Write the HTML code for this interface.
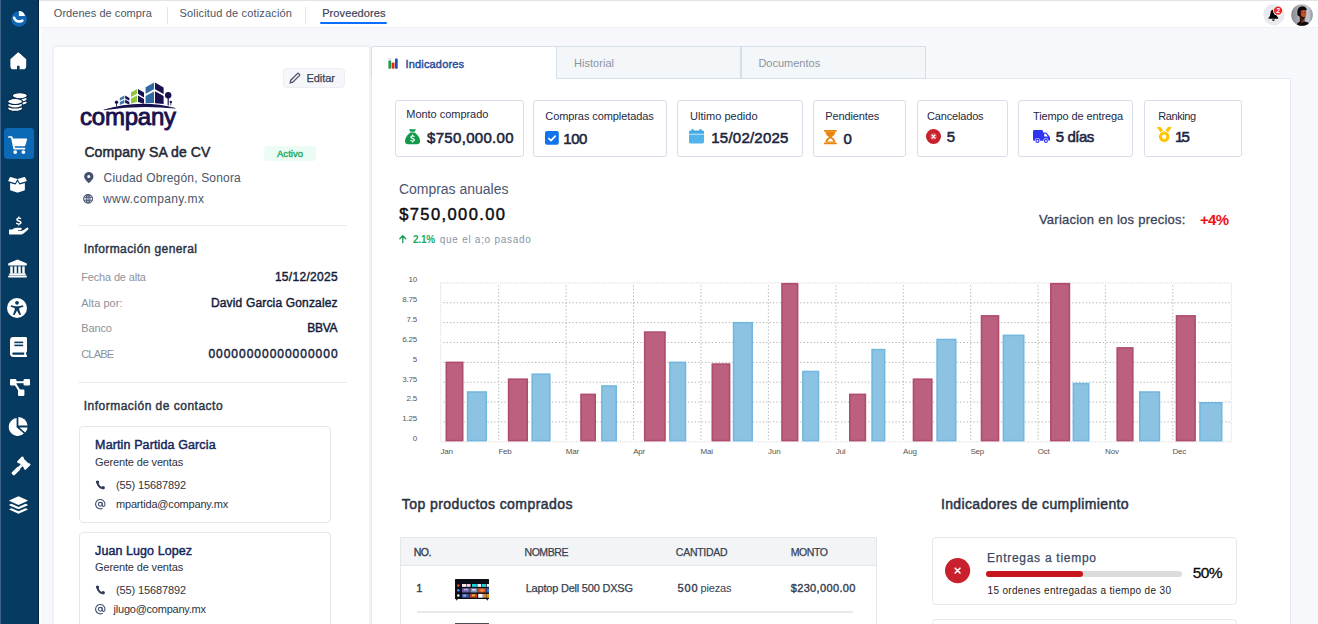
<!DOCTYPE html>
<html lang="es">
<head>
<meta charset="utf-8">
<title>Proveedores</title>
<style>
*{box-sizing:border-box;margin:0;padding:0}
html,body{width:1318px;height:624px;overflow:hidden}
body{position:relative;background:#f7f8fc;font-family:"Liberation Sans",sans-serif;color:#1f2937;font-size:11px}
.a{position:absolute}
.t{position:absolute;white-space:pre;line-height:1}
svg{position:absolute;overflow:visible}
#side{left:0;top:0;width:38.5px;height:624px;background:#073a60}
#side .act{left:3.8px;top:128.4px;width:29.8px;height:30.2px;background:#0b69b5;border-radius:3.5px}
#top{left:38.5px;top:0;width:1280px;height:28px;background:#fff;border-top:1px solid #e4e4e8;border-bottom:1px solid #eef0f5}
.sep{width:1px;height:17px;top:7px;background:#e3e5ea}
#lcard{left:51.6px;top:45px;width:319px;height:600px;background:#fff;border:2px solid #f0f1f5;border-radius:4px}
.hr{height:1px;background:#e9ebef}
.cc{left:79px;width:252px;border:1px solid #e4e7ec;border-radius:4px;background:#fff}
.tab{top:45.5px;height:33.5px;width:185px;border:1px solid #d6dee9;background:#f4f7fa}
#panel{left:371px;top:78px;width:920px;height:560px;background:#fff;border:1px solid #e6e9ef}
.sc{top:100px;height:57px;border:1px solid #d7dee9;border-radius:3px;background:#fff}
</style>
</head>
<body>
<div id="side" class="a"><div class="a" style="left:0;top:0;width:1px;height:624px;background:#3b6486"></div><div class="a" style="left:37.5px;top:0;width:1px;height:624px;background:#031c40"></div><div class="a" style="left:38.5px;top:0;width:2.5px;height:624px;background:#fff"></div><div class="a act"></div>
<svg style="left:10.1px;top:9.9px" width="18" height="18" viewBox="0 0 18 18"><circle cx="9" cy="9" r="8.3" fill="#1166b4" stroke="#052c52" stroke-width=".7"/><path d="M8.9 6 V.9 A6.4 6.4 0 0 1 15 6 Z" fill="#fff"/><path d="M4.1 7.7 Q5.4 11.9 9.6 11.6 Q11.4 11.4 12.4 10.5" fill="none" stroke="#fff" stroke-width="2.5" stroke-linecap="round"/></svg>
<svg style="left:8px;top:50px" width="20" height="20" viewBox="0 0 20 20"><path d="M10.3 3 L3 9.4 V16.2 Q3 18.7 5.5 18.7 H8.4 V16.8 Q8.4 15 10.3 15 Q12.2 15 12.2 16.8 V18.7 H15.1 Q17.6 18.7 17.6 16.2 V9.4 Z" fill="#fff" stroke="#fff" stroke-width="1.2" stroke-linejoin="round"/></svg>
<svg style="left:0;top:80px" width="40" height="40" viewBox="0 0 40 40" fill="#fff" stroke="#04284a" stroke-width="1.1">
<ellipse cx="19.8" cy="22.4" rx="7.5" ry="3"/><ellipse cx="19.8" cy="19.1" rx="7.5" ry="3"/><ellipse cx="19.8" cy="15.7" rx="7.5" ry="3"/>
<ellipse cx="15.1" cy="28.4" rx="7.5" ry="3"/><ellipse cx="15.1" cy="25" rx="7.5" ry="3"/><ellipse cx="15.1" cy="21.5" rx="7.5" ry="3"/></svg>
<svg style="left:7.6px;top:134.7px" width="20" height="19" viewBox="0 0 20 19" fill="#fff"><path d="M0.8 1.2 H3.6 Q4.4 1.2 4.6 2 L4.9 3.4 H18.4 Q19.4 3.4 19.1 4.4 L17.3 10.6 Q17.1 11.3 16.4 11.3 H6.6 L6.9 12.8 H16.6 Q17.4 12.8 17.4 13.6 Q17.4 14.4 16.6 14.4 H6.2 Q5.5 14.4 5.3 13.7 L3 2.8 H0.8 Q0 2.8 0 2 Q0 1.2 0.8 1.2 Z"/><circle cx="7.2" cy="17.1" r="1.9"/><circle cx="15.4" cy="17.1" r="1.9"/></svg><svg style="left:8.1px;top:175.5px" width="19" height="17" viewBox="0 0 20 18" fill="#fff"><path d="M2.2 7.5 V14.2 Q2.2 15 3 15.3 L9.4 17.4 Q10 17.6 10.6 17.4 L17 15.3 Q17.8 15 17.8 14.2 V7.5 L12.6 9 Q12 9.2 11.7 8.6 L10 5.6 L8.3 8.6 Q8 9.2 7.4 9 Z"/><path d="M2 1.4 L0.3 4.8 Q0.1 5.3 0.6 5.5 L7.2 7.4 Q7.6 7.5 7.8 7.1 L10 3.2 L2.6 1.1 Q2.2 1 2 1.4 Z"/><path d="M18 1.4 L19.7 4.8 Q19.9 5.3 19.4 5.5 L12.8 7.4 Q12.4 7.5 12.2 7.1 L10 3.2 L17.4 1.1 Q17.8 1 18 1.4 Z"/></svg><svg style="left:8.6px;top:216.0px" width="20" height="20" viewBox="0 0 20 20" fill="#fff"><path d="M0.6 13.6 H3.2 L5.2 12.2 Q6 11.7 7 11.7 H11.6 Q12.8 11.7 12.8 12.8 Q12.8 13.9 11.6 13.9 H9.2 Q8.8 13.9 8.8 14.3 Q8.8 14.7 9.2 14.7 H12.9 Q13.6 14.7 14.2 14.3 L17.4 11.9 Q18.4 11.2 19.2 12 Q19.9 12.9 19 13.7 L14.6 17.6 Q13.7 18.4 12.5 18.4 H0.6 Q0 18.4 0 17.8 V14.2 Q0 13.6 0.6 13.6 Z"/>
<path d="M9.2 0.6 H10.4 V1.5 Q11.6 1.6 12.4 2.3 L11.7 3.3 Q10.9 2.7 9.9 2.7 Q8.9 2.7 8.9 3.4 Q8.9 4 10.2 4.3 Q12.7 4.9 12.7 6.7 Q12.7 8.3 10.4 8.6 V9.6 H9.2 V8.6 Q7.8 8.5 6.8 7.6 L7.6 6.6 Q8.6 7.4 9.8 7.4 Q11 7.4 11 6.7 Q11 6.1 9.6 5.7 Q7.2 5.1 7.2 3.4 Q7.2 1.9 9.2 1.5 Z"/></svg><svg style="left:7.9px;top:259.1px" width="19" height="19" viewBox="0 0 20 20" fill="#fff"><path d="M10 0.4 L0.6 4.6 Q0.2 4.8 0.2 5.2 V6.2 Q0.2 6.8 0.8 6.8 H19.2 Q19.8 6.8 19.8 6.2 V5.2 Q19.8 4.8 19.4 4.6 Z"/><rect x="2.4" y="7.8" width="2.6" height="7.2"/><rect x="6.6" y="7.8" width="2.6" height="7.2"/><rect x="10.8" y="7.8" width="2.6" height="7.2"/><rect x="15" y="7.8" width="2.6" height="7.2"/><rect x="1.4" y="15" width="17.2" height="2" rx=".5"/><rect x="0.2" y="17.4" width="19.6" height="2.2" rx=".6"/></svg><svg style="left:7.4px;top:298.0px" width="20" height="20" viewBox="0 0 20 20" fill="#fff"><circle cx="10" cy="10" r="10"/><circle cx="10" cy="4.8" r="1.9" fill="#073a60"/><path d="M4 7.2 L8.2 8.2 H11.8 L16 7.2 L16.4 8.7 L12.3 9.9 V12 L14 16.6 L12.5 17.2 L10 12.6 L7.5 17.2 L6 16.6 L7.7 12 V9.9 L3.6 8.7 Z" fill="#073a60"/></svg><svg style="left:9.5px;top:337.0px" width="17" height="20" viewBox="0 0 17 20" fill="#fff"><path d="M3.4 0 H15.6 Q17 0 17 1.4 V14 Q17 15 16.2 15.3 V17.8 H16.4 Q17 17.8 17 18.9 Q17 20 16.4 20 H3.4 Q0 20 0 16.6 V3.4 Q0 0 3.4 0 Z"/><rect x="4.4" y="4.6" width="8.8" height="1.6" fill="#073a60"/><rect x="4.4" y="7.6" width="8.8" height="1.6" fill="#073a60"/><path d="M3.4 15.6 H14.2 V17.8 H3.4 Q2.2 17.8 2.2 16.7 Q2.2 15.6 3.4 15.6 Z" fill="#073a60"/></svg><svg style="left:9.8px;top:379.0px" width="20" height="17" viewBox="0 0 20 17" fill="#fff"><rect x="0" y="0" width="6.4" height="6.4" rx="1.2"/><rect x="13.6" y="0" width="6.4" height="6.4" rx="1.2"/><rect x="8" y="10.6" width="6.4" height="6.4" rx="1.2"/><rect x="5" y="2.2" width="10" height="2"/><path d="M4.2 5.2 L6 4.2 L10.6 11.6 L8.8 12.6 Z"/></svg><svg style="left:8.0px;top:417.0px" width="20" height="20" viewBox="0 0 20 20" fill="#fff"><path d="M8.6 1 A9 9 0 1 0 15.8 16.6 L8.6 10.2 Z"/><path d="M10.4 0 A9.4 9.4 0 0 1 19.6 8.6 H10.4 Z"/><path d="M11.4 10.4 H19.6 A9.4 9.4 0 0 1 17.2 15.6 Z"/></svg><svg style="left:9.8px;top:456.8px" width="20" height="20" viewBox="0 0 20 20" fill="#fff"><g transform="rotate(45 10 10)"><rect x="5.2" y="1.4" width="9.6" height="6.4" rx=".6"/><rect x="4" y="0.6" width="2.6" height="8" rx="1"/><rect x="13.4" y="0.6" width="2.6" height="8" rx="1"/><rect x="8.7" y="7.8" width="2.6" height="4"/><rect x="8" y="11" width="4" height="9.6" rx="1.2"/></g></svg><svg style="left:8.5px;top:495.0px" width="19" height="20" viewBox="0 0 20 19" fill="#fff"><path d="M10 0.2 L19.4 4.4 Q20 4.8 19.4 5.2 L10 9.4 L0.6 5.2 Q0 4.8 0.6 4.4 Z"/><path d="M2.6 8.2 L10 11.5 L17.4 8.2 L19.4 9.1 Q20 9.5 19.4 9.9 L10 14.1 L0.6 9.9 Q0 9.5 0.6 9.1 Z"/><path d="M2.6 12.9 L10 16.2 L17.4 12.9 L19.4 13.8 Q20 14.2 19.4 14.6 L10 18.8 L0.6 14.6 Q0 14.2 0.6 13.8 Z"/></svg></div>
<div id="top" class="a"></div>
<div class="a sep" style="left:167px"></div>
<div class="a sep" style="left:305.3px"></div>
<div class="a" style="left:320.2px;top:22.1px;width:67.3px;height:2.1px;background:#0d6efd;border-radius:1px"></div>
<div id="lcard" class="a"></div>
<div class="a" style="left:283px;top:68px;width:62px;height:19.5px;background:#f6f7fb;border:1px solid #eceef3;border-radius:4px"></div>
<svg style="left:288.6px;top:71.6px" width="12" height="12" viewBox="0 0 12 12" fill="none" stroke="#47516a" stroke-width="1.3"><path d="M1.2 10.8 L1.8 8.2 L8.4 1.6 Q9 1 9.6 1.6 L10.4 2.4 Q11 3 10.4 3.6 L3.8 10.2 Z"/></svg>
<svg style="left:70px;top:70px" width="120" height="70" viewBox="0 0 120 70">
<g fill="#17124f">
<path d="M33 40 Q70 28.5 106 38.2 Q70 33.5 33 40 Z"/>
<path d="M33.5 39.8 Q70 30 105.5 38 L105 38.6 Q70 34.6 34 40.2 Z"/>
<circle cx="46.5" cy="32.3" r="1.7"/><rect x="46.1" y="33" width=".9" height="3.6"/>
<circle cx="98.2" cy="25.2" r="3.2"/><rect x="97.6" y="27" width="1.2" height="8.4"/>
<circle cx="100.8" cy="32" r="1.2"/><rect x="100.5" y="32" width=".7" height="3.6"/>
<path d="M55.2 25.6 L59.4 28 V30.8 L55.2 28.4 Z"/><path d="M55.2 29.6 L59.4 32 V34.6 L55.2 33 Z"/>
<path d="M68 19 L74 22.6 V27.4 L68 23.8 Z"/><path d="M68 25.4 L74 29 V33.8 L68 32 Z"/>
<path d="M85 12.4 L93.6 17.4 V24 L85 19.2 Z"/><path d="M85 21.2 L93.6 26 V34 L85 33.2 Z"/>
</g>
<g fill="#3f78a8"><path d="M49.8 28 L54.4 25.6 V28.4 L49.8 30.8 Z"/><path d="M49.8 32 L54.4 29.8 V33 L49.8 35 Z"/></g>
<g fill="#8dc63f"><path d="M61 22.4 L67 19 V23.8 L61 27 Z"/><path d="M61 28.6 L67 25.4 V32 L61 33.6 Z"/></g>
<g fill="#2f6aa3"><path d="M75.6 17.2 L84 12.4 V19.2 L75.6 23.8 Z"/><path d="M75.6 26 L84 21.4 V33 L75.6 33.2 Z"/></g>
</svg>
<div class="a" style="left:263.6px;top:146px;width:52.4px;height:14.6px;background:#eafcf3;border-radius:4px"></div>
<svg style="left:84.1px;top:172.2px" width="9.6" height="11.2" viewBox="0 0 9.6 11.2" fill="#44506f"><path d="M4.8 0 A4.7 4.7 0 0 1 9.5 4.6 Q9.5 7.2 4.8 11.2 Q0.1 7.2 0.1 4.6 A4.7 4.7 0 0 1 4.8 0 Z M4.8 2.9 A1.55 1.55 0 1 0 4.8 6 A1.55 1.55 0 1 0 4.8 2.9 Z" fill-rule="evenodd"/></svg>
<svg style="left:83.2px;top:193.6px" width="10.2" height="9.6" viewBox="0 0 10.2 9.6" fill="none" stroke="#4c5877" stroke-width="1.05"><ellipse cx="5.1" cy="4.8" rx="4.5" ry="4.2"/><ellipse cx="5.1" cy="4.8" rx="1.9" ry="4.2"/><path d="M.9 3.3 H9.3 M.9 6.3 H9.3 M5.1 .6 V9"/></svg>
<div class="a hr" style="left:78px;top:225px;width:269px"></div>
<div class="a hr" style="left:78px;top:382px;width:269px"></div>
<div class="a cc" style="top:425.5px;height:97px"></div>
<div class="a cc" style="top:531.5px;height:100px"></div>
<svg style="left:94.9px;top:480.1px" width="10.4" height="10" viewBox="0 0 10.4 10"><path d="M2.5 2 Q2.3 4.6 4.6 6.7 Q6.3 8.2 8.3 7.9" fill="none" stroke="#2f3c5e" stroke-width="2" stroke-linecap="round"/><circle cx="2.5" cy="2.1" r="1.7" fill="#2f3c5e"/><circle cx="8.2" cy="7.8" r="1.7" fill="#2f3c5e"/></svg>
<svg style="left:94.9px;top:585.4px" width="10.4" height="10" viewBox="0 0 10.4 10"><path d="M2.5 2 Q2.3 4.6 4.6 6.7 Q6.3 8.2 8.3 7.9" fill="none" stroke="#2f3c5e" stroke-width="2" stroke-linecap="round"/><circle cx="2.5" cy="2.1" r="1.7" fill="#2f3c5e"/><circle cx="8.2" cy="7.8" r="1.7" fill="#2f3c5e"/></svg>
<svg style="left:94.9px;top:499px" width="10.7" height="10.7" viewBox="0 0 10.7 10.7" fill="none" stroke="#47537280" stroke-width="1.1"><g stroke="#475372"><circle cx="5.3" cy="5.3" r="1.9"/><path d="M7.3 3.4 V6 Q7.3 7.4 8.5 7.4 Q10 7.2 10 5.2 A4.7 4.7 0 1 0 7.6 9.3"/></g></svg>
<svg style="left:94.9px;top:604.4px" width="10.7" height="10.7" viewBox="0 0 10.7 10.7" fill="none" stroke="#47537280" stroke-width="1.1"><g stroke="#475372"><circle cx="5.3" cy="5.3" r="1.9"/><path d="M7.3 3.4 V6 Q7.3 7.4 8.5 7.4 Q10 7.2 10 5.2 A4.7 4.7 0 1 0 7.6 9.3"/></g></svg>
<svg style="left:1263px;top:4px" width="22" height="22" viewBox="0 0 22 22"><circle cx="11" cy="10.8" r="10.6" fill="#e9eaef"/>
<path d="M10.4 5.6 Q7.4 6.2 7.4 9.6 Q7.4 12.4 5.6 13.8 V14.8 H15.2 V13.8 Q13.4 12.4 13.4 9.6 Q13.4 6.2 10.4 5.6 Z M9 15.6 H11.8 A1.4 1.4 0 0 1 9 15.6 Z" fill="#050505"/>
<circle cx="15" cy="6.6" r="5" fill="#effafa"/><circle cx="15" cy="6.6" r="4.2" fill="#f0261c"/></svg>
<svg style="left:1290.5px;top:3.6px" width="22" height="22" viewBox="0 0 22 22"><defs><clipPath id="av"><circle cx="11" cy="11" r="10.8"/></clipPath><linearGradient id="avg" x1="0" x2="1"><stop offset="0" stop-color="#88888e"/><stop offset=".35" stop-color="#a9abb1"/><stop offset=".8" stop-color="#c3c9d2"/><stop offset="1" stop-color="#909096"/></linearGradient></defs>
<g clip-path="url(#av)"><rect width="22" height="22" fill="url(#avg)"/>
<path d="M5.4 22 L6.6 19 L8.8 17.6 V13 L13.4 14 V17.4 L17.4 18.6 L18.2 22 Z" fill="#100b0a"/>
<path d="M9.4 14 L9.8 18.6 Q11.4 19.4 12.8 17 L13.2 13.4 Z" fill="#5a2412"/>
<path d="M12.6 15.6 L12.8 17.6 L11.2 19 Z" fill="#c4562e"/>
<ellipse cx="11.6" cy="9.8" rx="3.7" ry="5" fill="#c9532d"/>
<path d="M7.9 8.6 Q8 15 11.6 15.2 Q13.6 15 14.6 12.8 Q12.6 13.6 11 12.4 Q9.6 11.4 9.6 8.6 Z" fill="#2a130c"/>
<path d="M6.6 11.4 Q5.2 4.8 9.2 2.8 Q13.4 1.2 15.6 4.8 Q15.8 6.8 14.8 6.4 Q11.4 5.2 9.8 7.2 Q9 9 8.6 12.4 Z" fill="#0e0909"/>
<path d="M13.2 8.6 L14.4 8.4 M10.4 8.8 L11.8 8.6" stroke="#3a170c" stroke-width=".7"/>
</g></svg>
<div id="panel" class="a"></div>
<div class="a tab" style="left:556px"></div><div class="a tab" style="left:741px"></div>
<div class="a tab" style="left:371px;width:186px;background:#fff;border-bottom-color:#fff;border-top-left-radius:3px"></div>
<svg style="left:387.5px;top:57px" width="10.5" height="12" viewBox="0 0 10.5 12"><rect x=".2" y="1" width="3" height="2" fill="#dfe6f3"/><rect x=".4" y="3.6" width="2.8" height="8.2" rx=".8" fill="#1e9e4a"/><rect x="3.7" y="5.6" width="2.8" height="6.2" rx=".8" fill="#e02b20"/><rect x="7" y="1.6" width="2.7" height="10.2" rx=".8" fill="#1f4fae"/></svg>
<div class="a sc" style="left:395px;width:129.0px"></div>
<div class="a sc" style="left:533px;width:134.0px"></div>
<div class="a sc" style="left:677px;width:126.0px"></div>
<div class="a sc" style="left:813px;width:93.0px"></div>
<div class="a sc" style="left:917px;width:91.0px"></div>
<div class="a sc" style="left:1018px;width:115.0px"></div>
<div class="a sc" style="left:1144px;width:98.0px"></div>
<svg style="left:405px;top:129px" width="15" height="15.2" viewBox="0 0 15 15.2"><path d="M4.4 0.3 H10.6 Q11 .3 10.8 .8 L9.6 2.8 H5.4 L4.2 .8 Q4 .3 4.4 .3 Z M5.3 3.6 H9.7 Q15 8 15 12 Q15 15.2 12 15.2 H3 Q0 15.2 0 12 Q0 8 5.3 3.6 Z" fill="#109b4b"/><path d="M7 5.6 H8.1 V6.5 Q9.1 6.6 9.8 7.2 L9.2 8.1 Q8.5 7.6 7.6 7.6 Q6.8 7.6 6.8 8.1 Q6.8 8.6 7.9 8.9 Q10 9.4 10 10.9 Q10 12.2 8.1 12.5 V13.4 H7 V12.5 Q5.8 12.4 5 11.6 L5.7 10.8 Q6.5 11.4 7.5 11.4 Q8.5 11.4 8.5 10.9 Q8.5 10.4 7.3 10.1 Q5.3 9.6 5.3 8.1 Q5.3 6.8 7 6.5 Z" fill="#fff"/></svg>
<svg style="left:544.5px;top:130.6px" width="13.8" height="13.8" viewBox="0 0 14 14"><rect width="14" height="14" rx="2" fill="#1273ea"/><path d="M3.8 7.6 L6.1 9.8 L10.4 5.2" fill="none" stroke="#fff" stroke-width="1.7" stroke-linecap="round" stroke-linejoin="round"/></svg>
<svg style="left:689.4px;top:129.2px" width="15" height="14.4" viewBox="0 0 15 14.4"><rect x="2.6" y="0" width="2" height="3.4" rx=".6" fill="#3fa9e4"/><rect x="10.4" y="0" width="2" height="3.4" rx=".6" fill="#3fa9e4"/><path d="M1.4 1.6 H13.6 Q15 1.6 15 3 V4.8 H0 V3 Q0 1.6 1.4 1.6 Z" fill="#3fa9e4"/><path d="M0 5.6 H15 V13 Q15 14.4 13.6 14.4 H1.4 Q0 14.4 0 13 Z" fill="#52b4ea"/></svg>
<svg style="left:824px;top:130.3px" width="12.8" height="14.2" viewBox="0 0 12.8 14.2"><path d="M.6 0 H12.2 Q12.8 0 12.8 .9 Q12.8 1.8 12.2 1.8 H.6 Q0 1.8 0 .9 Q0 0 .6 0 Z M.6 12.4 H12.2 Q12.8 12.4 12.8 13.3 Q12.8 14.2 12.2 14.2 H.6 Q0 14.2 0 13.3 Q0 12.4 .6 12.4 Z" fill="#e8850c"/><path d="M1.5 1.8 H11.3 Q11.3 5 7.6 7.1 Q11.3 9.2 11.3 12.4 H1.5 Q1.5 9.2 5.2 7.1 Q1.5 5 1.5 1.8 Z M6.4 8.2 Q3.9 9.6 3.4 11.4 H9.4 Q8.9 9.6 6.4 8.2 Z" fill="#e8850c" fill-rule="evenodd"/></svg>
<svg style="left:926.2px;top:129.2px" width="15" height="15" viewBox="0 0 15 15"><circle cx="7.5" cy="7.5" r="7.5" fill="#c8202c"/><circle cx="7.5" cy="7.5" r="3.4" fill="#d9474f"/><path d="M6 6 L9 9 M9 6 L6 9" stroke="#fff" stroke-width="1.2" stroke-linecap="round"/></svg>
<svg style="left:1033.1px;top:130px" width="17" height="13.4" viewBox="0 0 17 13.4" fill="#2f33f2"><path d="M1.2 0 H8.8 Q10 0 10 1.2 V2.6 H12.6 Q13.4 2.6 13.9 3.2 L16.4 6.2 Q17 6.9 17 7.6 V9.8 Q17 10.8 16 10.8 H15.4 A2.5 2.5 0 0 0 10.4 10.8 H7 A2.5 2.5 0 0 0 2 10.8 H1.2 Q0 10.8 0 9.6 V1.2 Q0 0 1.2 0 Z M11.2 3.8 V6.6 H15 L12.8 3.8 Z" fill-rule="evenodd"/><circle cx="4.5" cy="10.9" r="1.5" fill="#fff" stroke="#2f33f2" stroke-width="1.1"/><circle cx="12.9" cy="10.9" r="1.5" fill="#fff" stroke="#2f33f2" stroke-width="1.1"/></svg>
<svg style="left:1157px;top:127.4px" width="14.6" height="15" viewBox="0 0 14.6 15"><path d="M0 .4 Q0 0 .5 0 H3.2 Q3.7 0 4 .4 L6.1 3.6 L3.4 5.3 Z M14.6 .4 Q14.6 0 14.1 0 H11.4 Q10.9 0 10.6 .4 L8.5 3.6 L11.2 5.3 Z" fill="#fdc500"/><circle cx="7.2" cy="9.7" r="3.75" fill="none" stroke="#fdc500" stroke-width="3.1"/></svg>
<svg style="left:398.8px;top:235px" width="7.6" height="8.2" viewBox="0 0 7.6 8.2" fill="none" stroke="#1a9c55" stroke-width="1.3" stroke-linecap="round" stroke-linejoin="round"><path d="M3.8 7.6 V.9 M.8 3.8 L3.8 .8 L6.8 3.8"/></svg>
<svg style="left:0;top:0" width="1318" height="624" viewBox="0 0 1318 624">
<g fill="none" stroke="#b4b4b4" stroke-width="1" stroke-dasharray="1.3 2.1">
<path d="M443.2 302.8 H1231.3"/><path d="M443.2 322.6 H1231.3"/><path d="M443.2 342.5 H1231.3"/><path d="M443.2 362.4 H1231.3"/><path d="M443.2 382.2 H1231.3"/><path d="M443.2 402.1 H1231.3"/><path d="M443.2 421.9 H1231.3"/><path d="M498.7 285.4 V441.8"/><path d="M566.1 285.4 V441.8"/><path d="M633.5 285.4 V441.8"/><path d="M700.9 285.4 V441.8"/><path d="M768.4 285.4 V441.8"/><path d="M836.0 285.4 V441.8"/><path d="M903.3 285.4 V441.8"/><path d="M970.7 285.4 V441.8"/><path d="M1038.0 285.4 V441.8"/><path d="M1105.4 285.4 V441.8"/><path d="M1172.8 285.4 V441.8"/></g>
<rect x="440.7" y="282.9" width="790.6" height="158.9" fill="none" stroke="#d4d4d4" stroke-width="1" stroke-dasharray="1 1.2"/>
<rect x="446.3" y="362.4" width="16.4" height="78.2" fill="#bb607e" stroke="#b04c6f" stroke-width="1.6"/><rect x="508.6" y="379.2" width="18.6" height="61.4" fill="#bb607e" stroke="#b04c6f" stroke-width="1.6"/><rect x="581.0" y="394.4" width="14.2" height="46.2" fill="#bb607e" stroke="#b04c6f" stroke-width="1.6"/><rect x="644.7" y="332.1" width="20.3" height="108.5" fill="#bb607e" stroke="#b04c6f" stroke-width="1.6"/><rect x="712.3" y="364.1" width="17.3" height="76.5" fill="#bb607e" stroke="#b04c6f" stroke-width="1.6"/><rect x="782.0" y="283.7" width="15.6" height="156.9" fill="#bb607e" stroke="#b04c6f" stroke-width="1.6"/><rect x="849.8" y="394.4" width="15.6" height="46.2" fill="#bb607e" stroke="#b04c6f" stroke-width="1.6"/><rect x="913.5" y="379.2" width="18.3" height="61.4" fill="#bb607e" stroke="#b04c6f" stroke-width="1.6"/><rect x="981.5" y="315.9" width="17.0" height="124.7" fill="#bb607e" stroke="#b04c6f" stroke-width="1.6"/><rect x="1050.8" y="283.7" width="18.6" height="156.9" fill="#bb607e" stroke="#b04c6f" stroke-width="1.6"/><rect x="1117.2" y="347.9" width="15.6" height="92.7" fill="#bb607e" stroke="#b04c6f" stroke-width="1.6"/><rect x="1176.5" y="315.9" width="18.6" height="124.7" fill="#bb607e" stroke="#b04c6f" stroke-width="1.6"/>
<rect x="467.6" y="392.0" width="18.6" height="48.6" fill="#8cc3e2" stroke="#72b7df" stroke-width="1.6"/><rect x="532.2" y="374.2" width="17.6" height="66.4" fill="#8cc3e2" stroke="#72b7df" stroke-width="1.6"/><rect x="601.9" y="386.0" width="14.3" height="54.6" fill="#8cc3e2" stroke="#72b7df" stroke-width="1.6"/><rect x="669.9" y="362.4" width="15.6" height="78.2" fill="#8cc3e2" stroke="#72b7df" stroke-width="1.6"/><rect x="733.6" y="322.7" width="18.6" height="117.9" fill="#8cc3e2" stroke="#72b7df" stroke-width="1.6"/><rect x="802.9" y="371.5" width="15.6" height="69.1" fill="#8cc3e2" stroke="#72b7df" stroke-width="1.6"/><rect x="872.1" y="349.6" width="12.5" height="91.0" fill="#8cc3e2" stroke="#72b7df" stroke-width="1.6"/><rect x="937.1" y="339.5" width="18.6" height="101.1" fill="#8cc3e2" stroke="#72b7df" stroke-width="1.6"/><rect x="1003.4" y="335.4" width="20.3" height="105.2" fill="#8cc3e2" stroke="#72b7df" stroke-width="1.6"/><rect x="1073.4" y="383.6" width="15.3" height="57.0" fill="#8cc3e2" stroke="#72b7df" stroke-width="1.6"/><rect x="1139.8" y="392.0" width="19.6" height="48.6" fill="#8cc3e2" stroke="#72b7df" stroke-width="1.6"/><rect x="1200.0" y="402.8" width="21.7" height="37.8" fill="#8cc3e2" stroke="#72b7df" stroke-width="1.6"/>
</svg>
<div class="a" style="left:399.5px;top:537px;width:477.2px;height:100px;border:1px solid #e5e7eb;background:#fff"></div>
<div class="a" style="left:400.5px;top:538px;width:475.2px;height:28px;background:#f3f4f6;border-bottom:1px solid #e5e7eb"></div>
<div class="a" style="left:417px;top:611.3px;width:435.5px;height:1.4px;background:#e8e9ec"></div>
<svg style="left:455.2px;top:578.5px" width="34" height="22" viewBox="0 0 34 22"><rect width="34" height="20" rx=".5" fill="#0b0e16"/><path d="M.8 20 H3 L1.4 21.8 Z M31 20 H33.2 L32.6 21.8 Z" fill="#2a2d35"/>
<circle cx="3.3" cy="6.4" r="1.25" fill="#ef4a3c"/><circle cx="3.3" cy="11.3" r="1.25" fill="#5b8def"/><circle cx="3.3" cy="16.6" r="1.25" fill="#f4f4f4"/>
<rect x="7" y="5" width="4.2" height="2.9" fill="#fbe9ea"/><rect x="11.6" y="5" width="4" height="2.9" fill="#f6cfd3"/><rect x="17" y="5" width="4.8" height="2.9" fill="#18d3e0"/><rect x="22.4" y="5" width="3.8" height="2.9" fill="#fbeef0"/><rect x="26.8" y="5" width="4.4" height="2.9" fill="#22d0dd"/><rect x="31.8" y="5" width="2.2" height="2.9" fill="#f1f1f1"/>
<rect x="7" y="9.2" width="7.8" height="4.3" fill="#6c5ea8"/><rect x="9" y="9.8" width="4" height="1.6" fill="#b9a8d8"/><rect x="15.4" y="9.2" width="7.2" height="4.3" fill="#7f8fb6"/><rect x="17" y="10" width="3.6" height="1.6" fill="#d9dde8"/><rect x="23.2" y="9.2" width="7.6" height="4.3" fill="#d6532b"/><rect x="25.6" y="10.4" width="3" height="2" fill="#f0a03c"/><rect x="31.4" y="9.2" width="2.6" height="4.3" fill="#3a6ad0"/>
<rect x="7" y="14.9" width="6.8" height="3.8" fill="#3d5ba3"/><rect x="8.4" y="15.6" width="2.4" height="2" fill="#8fb0e8"/><rect x="14.6" y="14.9" width="7.6" height="3.8" fill="#b8452a"/><rect x="17" y="15.4" width="3" height="1.8" fill="#f0b040"/><rect x="23.2" y="14.9" width="4.6" height="3.8" fill="#fdfdfd"/><rect x="27.8" y="14.9" width="3.2" height="3.8" fill="#d98a4a"/><rect x="31.4" y="14.9" width="2.6" height="3.8" fill="#e09a20"/></svg>
<div class="a" style="left:455.2px;top:623px;width:34px;height:3px;background:#4a4d55"></div>
<div class="a" style="left:931.6px;top:537px;width:305.8px;height:68px;border:1px solid #e4e7ec;border-radius:4px;background:#fff"></div>
<div class="a" style="left:931.6px;top:619px;width:305.8px;height:30px;border:1px solid #e4e7ec;border-radius:4px;background:#fff"></div>
<svg style="left:944.7px;top:558.3px" width="25.2" height="25.2" viewBox="0 0 25.2 25.2"><circle cx="12.6" cy="12.6" r="12.6" fill="#c8202c"/><path d="M10.2 10.2 L15 15 M15 10.2 L10.2 15" stroke="#fff" stroke-width="1.6" stroke-linecap="round"/></svg>
<div class="a" style="left:986.3px;top:570.6px;width:195.4px;height:6.6px;border-radius:3.3px;background:#dcdcdc"></div>
<div class="a" style="left:986.3px;top:570.6px;width:96.6px;height:6.6px;border-radius:3.3px;background:#c8161d"></div>
<div class="t" style="left:53.8px;top:8px;font-size:11px;color:#4b5563;letter-spacing:0.049px;">Ordenes de compra</div>
<div class="t" style="left:179.5px;top:8px;font-size:11px;color:#4b5563;letter-spacing:0.166px;">Solicitud de cotización</div>
<div class="t" style="left:322.2px;top:8px;font-size:11px;color:#3a4358;letter-spacing:0.093px;-webkit-text-stroke:.2px #3a4358;">Proveedores</div>
<div class="t" style="left:306.5px;top:73px;font-size:11px;color:#3a4358;letter-spacing:-0.050px;-webkit-text-stroke:.25px #3a4358;">Editar</div>
<div class="t" style="left:80.0px;top:105px;font-size:24px;color:#17124f;letter-spacing:-0.232px;-webkit-text-stroke:.9px #17124f;">company</div>
<div class="t" style="left:84.4px;top:145px;font-size:14px;color:#1f2937;letter-spacing:0.099px;-webkit-text-stroke:0.50px #1f2937;">Company SA de CV</div>
<div class="t" style="left:277.0px;top:149px;font-size:9.5px;color:#17a560;letter-spacing:0.025px;-webkit-text-stroke:0.34px #17a560;">Activo</div>
<div class="t" style="left:103.6px;top:172px;font-size:12px;color:#4a5568;letter-spacing:0.179px;">Ciudad Obregón, Sonora</div>
<div class="t" style="left:103.0px;top:193px;font-size:12px;color:#4a5568;letter-spacing:0.399px;">www.company.mx</div>
<div class="t" style="left:83.7px;top:243px;font-size:12px;color:#2b3445;letter-spacing:0.402px;-webkit-text-stroke:0.43px #2b3445;">Información general</div>
<div class="t" style="left:81.2px;top:272px;font-size:11px;color:#8d929b;letter-spacing:-0.155px;">Fecha de alta</div>
<div class="t" style="left:274.9px;top:271px;font-size:12px;color:#141d3a;letter-spacing:0.293px;-webkit-text-stroke:0.43px #141d3a;">15/12/2025</div>
<div class="t" style="left:81.2px;top:298px;font-size:11px;color:#8d929b;letter-spacing:0.041px;">Alta por:</div>
<div class="t" style="left:210.9px;top:297px;font-size:12px;color:#141d3a;letter-spacing:0.165px;-webkit-text-stroke:0.43px #141d3a;">David Garcia Gonzalez</div>
<div class="t" style="left:81.2px;top:323px;font-size:11px;color:#8d929b;letter-spacing:-0.101px;">Banco</div>
<div class="t" style="left:307.2px;top:322px;font-size:12px;color:#141d3a;letter-spacing:-0.242px;-webkit-text-stroke:0.43px #141d3a;">BBVA</div>
<div class="t" style="left:81.2px;top:349px;font-size:11px;color:#8d929b;letter-spacing:-0.770px;">CLABE</div>
<div class="t" style="left:208.4px;top:348px;font-size:12px;color:#141d3a;letter-spacing:0.983px;-webkit-text-stroke:0.43px #141d3a;">00000000000000000</div>
<div class="t" style="left:83.7px;top:400px;font-size:12px;color:#2b3445;letter-spacing:0.492px;-webkit-text-stroke:0.43px #2b3445;">Información de contacto</div>
<div class="t" style="left:95.1px;top:439px;font-size:12.5px;color:#14275c;letter-spacing:0.120px;-webkit-text-stroke:0.45px #14275c;">Martin Partida Garcia</div>
<div class="t" style="left:95.1px;top:457px;font-size:11px;color:#2d3340;letter-spacing:-0.151px;">Gerente de ventas</div>
<div class="t" style="left:116.0px;top:480px;font-size:11px;color:#2d3340;letter-spacing:-0.114px;">(55) 15687892</div>
<div class="t" style="left:116.0px;top:499px;font-size:11px;color:#2d3340;letter-spacing:-0.183px;">mpartida@company.mx</div>
<div class="t" style="left:95.1px;top:545px;font-size:12.5px;color:#14275c;letter-spacing:0.070px;-webkit-text-stroke:0.45px #14275c;">Juan Lugo Lopez</div>
<div class="t" style="left:95.1px;top:562px;font-size:11px;color:#2d3340;letter-spacing:-0.151px;">Gerente de ventas</div>
<div class="t" style="left:116.0px;top:585px;font-size:11px;color:#2d3340;letter-spacing:-0.114px;">(55) 15687892</div>
<div class="t" style="left:113.6px;top:604px;font-size:11px;color:#2d3340;letter-spacing:-0.237px;">jlugo@company.mx</div>
<div class="t" style="left:1276.2px;top:7px;font-size:7px;color:#fff;font-weight:700;">2</div>
<div class="t" style="left:405.6px;top:59px;font-size:11px;color:#1e4b9e;letter-spacing:0.152px;-webkit-text-stroke:0.40px #1e4b9e;">Indicadores</div>
<div class="t" style="left:574.0px;top:58px;font-size:11px;color:#8a93a0;letter-spacing:0.033px;">Historial</div>
<div class="t" style="left:758.4px;top:58px;font-size:11px;color:#8a93a0;letter-spacing:0.004px;">Documentos</div>
<div class="t" style="left:406.3px;top:109px;font-size:11px;color:#1f2a44;letter-spacing:-0.034px;">Monto comprado</div>
<div class="t" style="left:427.0px;top:130px;font-size:15px;color:#1c2540;letter-spacing:0.318px;-webkit-text-stroke:0.54px #1c2540;">$750,000.00</div>
<div class="t" style="left:545.3px;top:111px;font-size:11px;color:#1f2a44;letter-spacing:-0.087px;">Compras completadas</div>
<div class="t" style="left:563.3px;top:131px;font-size:15px;color:#1c2540;letter-spacing:-0.466px;-webkit-text-stroke:0.54px #1c2540;">100</div>
<div class="t" style="left:690.0px;top:111px;font-size:11px;color:#1f2a44;letter-spacing:0.028px;">Ultimo pedido</div>
<div class="t" style="left:711.3px;top:130px;font-size:15px;color:#1c2540;letter-spacing:0.225px;-webkit-text-stroke:0.54px #1c2540;">15/02/2025</div>
<div class="t" style="left:825.2px;top:111px;font-size:11px;color:#1f2a44;letter-spacing:-0.116px;">Pendientes</div>
<div class="t" style="left:843.5px;top:131px;font-size:15px;color:#1c2540;-webkit-text-stroke:0.54px #1c2540;">0</div>
<div class="t" style="left:927.1px;top:111px;font-size:11px;color:#1f2a44;letter-spacing:-0.177px;">Cancelados</div>
<div class="t" style="left:946.8px;top:129px;font-size:15px;color:#1c2540;-webkit-text-stroke:0.54px #1c2540;">5</div>
<div class="t" style="left:1033.0px;top:111px;font-size:11px;color:#1f2a44;letter-spacing:-0.109px;">Tiempo de entrega</div>
<div class="t" style="left:1055.7px;top:129px;font-size:15px;color:#1c2540;-webkit-text-stroke:0.54px #1c2540;">5</div>
<div class="t" style="left:1067.4px;top:129px;font-size:15px;color:#1c2540;letter-spacing:-0.486px;-webkit-text-stroke:0.54px #1c2540;">días</div>
<div class="t" style="left:1158.3px;top:111px;font-size:11px;color:#1f2a44;letter-spacing:-0.443px;">Ranking</div>
<div class="t" style="left:1175.0px;top:129px;font-size:15px;color:#1c2540;letter-spacing:-1.888px;-webkit-text-stroke:0.54px #1c2540;">15</div>
<div class="t" style="left:398.9px;top:182px;font-size:14px;color:#4a5570;letter-spacing:-0.010px;">Compras anuales</div>
<div class="t" style="left:399.2px;top:206px;font-size:16.5px;color:#0b0b0b;letter-spacing:1.403px;-webkit-text-stroke:.45px #0b0b0b;">$750,000.00</div>
<div class="t" style="left:413.0px;top:235px;font-size:10px;color:#1ea85a;font-weight:700;letter-spacing:-0.199px;">2.1%</div>
<div class="t" style="left:439.8px;top:235px;font-size:10px;color:#8a93a5;letter-spacing:0.718px;">que el a;o pasado</div>
<div class="t" style="left:1038.9px;top:213px;font-size:13px;color:#3a4459;letter-spacing:0.243px;-webkit-text-stroke:.3px #3a4459;">Variacion en los precios:</div>
<div class="t" style="left:1200.0px;top:212px;font-size:15px;color:#f00f14;font-weight:700;letter-spacing:-0.727px;">+4%</div>
<div class="t" style="left:0.0px;top:276px;font-size:8px;color:#555;left:auto;right:901.0px;letter-spacing:-.2px;">10</div>
<div class="t" style="left:0.0px;top:296px;font-size:8px;color:#555;left:auto;right:901.0px;letter-spacing:-.2px;">8.75</div>
<div class="t" style="left:0.0px;top:316px;font-size:8px;color:#555;left:auto;right:901.0px;letter-spacing:-.2px;">7.5</div>
<div class="t" style="left:0.0px;top:336px;font-size:8px;color:#555;left:auto;right:901.0px;letter-spacing:-.2px;">6.25</div>
<div class="t" style="left:0.0px;top:356px;font-size:8px;color:#555;left:auto;right:901.0px;letter-spacing:-.2px;">5</div>
<div class="t" style="left:0.0px;top:376px;font-size:8px;color:#555;left:auto;right:901.0px;letter-spacing:-.2px;">3.75</div>
<div class="t" style="left:0.0px;top:395px;font-size:8px;color:#555;left:auto;right:901.0px;letter-spacing:-.2px;">2.5</div>
<div class="t" style="left:0.0px;top:415px;font-size:8px;color:#555;left:auto;right:901.0px;letter-spacing:-.2px;">1.25</div>
<div class="t" style="left:0.0px;top:435px;font-size:8px;color:#555;left:auto;right:901.0px;letter-spacing:-.2px;">0</div>
<div class="t" style="left:440.4px;top:448px;font-size:8px;color:#555;letter-spacing:-.2px;">Jan</div>
<div class="t" style="left:498.4px;top:448px;font-size:8px;color:#555;letter-spacing:-.2px;">Feb</div>
<div class="t" style="left:565.8px;top:448px;font-size:8px;color:#555;letter-spacing:-.2px;">Mar</div>
<div class="t" style="left:633.2px;top:448px;font-size:8px;color:#555;letter-spacing:-.2px;">Apr</div>
<div class="t" style="left:700.6px;top:448px;font-size:8px;color:#555;letter-spacing:-.2px;">Mai</div>
<div class="t" style="left:768.1px;top:448px;font-size:8px;color:#555;letter-spacing:-.2px;">Jun</div>
<div class="t" style="left:835.7px;top:448px;font-size:8px;color:#555;letter-spacing:-.2px;">Jul</div>
<div class="t" style="left:903.0px;top:448px;font-size:8px;color:#555;letter-spacing:-.2px;">Aug</div>
<div class="t" style="left:970.4px;top:448px;font-size:8px;color:#555;letter-spacing:-.2px;">Sep</div>
<div class="t" style="left:1037.7px;top:448px;font-size:8px;color:#555;letter-spacing:-.2px;">Oct</div>
<div class="t" style="left:1105.1px;top:448px;font-size:8px;color:#555;letter-spacing:-.2px;">Nov</div>
<div class="t" style="left:1172.5px;top:448px;font-size:8px;color:#555;letter-spacing:-.2px;">Dec</div>
<div class="t" style="left:401.8px;top:497px;font-size:14px;color:#2b3445;letter-spacing:0.432px;-webkit-text-stroke:0.50px #2b3445;">Top productos comprados</div>
<div class="t" style="left:940.9px;top:497px;font-size:14px;color:#2b3445;letter-spacing:0.365px;-webkit-text-stroke:0.50px #2b3445;">Indicadores de cumplimiento</div>
<div class="t" style="left:413.8px;top:547px;font-size:10.5px;color:#374151;letter-spacing:-0.536px;-webkit-text-stroke:.35px #374151;">NO.</div>
<div class="t" style="left:524.5px;top:547px;font-size:10.5px;color:#374151;letter-spacing:-0.439px;-webkit-text-stroke:.25px #374151;">NOMBRE</div>
<div class="t" style="left:675.8px;top:547px;font-size:10.5px;color:#374151;letter-spacing:-0.253px;-webkit-text-stroke:.25px #374151;">CANTIDAD</div>
<div class="t" style="left:790.7px;top:547px;font-size:10.5px;color:#374151;letter-spacing:-0.423px;-webkit-text-stroke:.25px #374151;">MONTO</div>
<div class="t" style="left:416.2px;top:583px;font-size:11px;color:#374151;-webkit-text-stroke:0.40px #374151;">1</div>
<div class="t" style="left:525.7px;top:583px;font-size:11px;color:#374151;letter-spacing:-0.210px;-webkit-text-stroke:.25px #374151;">Laptop Dell 500 DXSG</div>
<div class="t" style="left:677.5px;top:583px;font-size:11px;color:#374151;letter-spacing:0.820px;-webkit-text-stroke:0.40px #374151;">500</div>
<div class="t" style="left:700.6px;top:583px;font-size:11px;color:#374151;letter-spacing:-0.179px;">piezas</div>
<div class="t" style="left:790.7px;top:583px;font-size:11px;color:#374151;letter-spacing:0.353px;-webkit-text-stroke:0.40px #374151;">$230,000.00</div>
<div class="t" style="left:987.0px;top:552px;font-size:12px;color:#3b4a63;letter-spacing:0.726px;-webkit-text-stroke:.25px #3b4a63;">Entregas a tiempo</div>
<div class="t" style="left:1192.8px;top:565px;font-size:15.5px;color:#0a0a0a;letter-spacing:-0.666px;-webkit-text-stroke:.3px #0a0a0a;">50%</div>
<div class="t" style="left:987.5px;top:586px;font-size:10px;color:#222;letter-spacing:0.334px;">15 ordenes entregadas a tiempo de 30</div>
</body>
</html>
